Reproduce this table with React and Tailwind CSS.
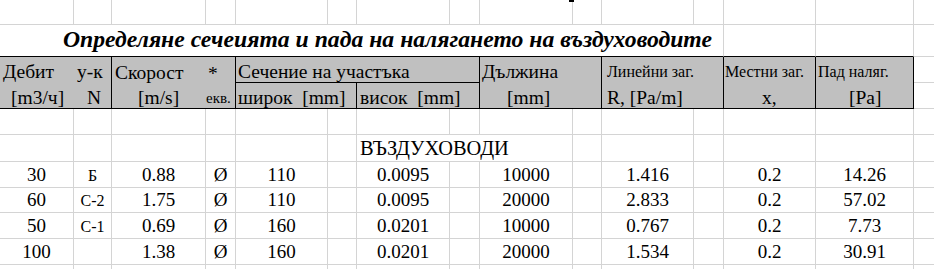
import React from "react";

// column widths incl. the 1px right grid line (Excel sheet columns)
const colW = [
  "w-[74px]", "w-[38px]", "w-[94px]", "w-[30px]", "w-[92px]", "w-[29px]", "w-[93px]",
  "w-[30px]", "w-[93px]", "w-[29px]", "w-[92px]", "w-[30px]", "w-[92px]", "w-[98px]", "w-[20px]",
];

const grid = "border-[#d4d4d4]";
const serif = "font-['Liberation_Serif','Times_New_Roman',serif]";

const rows = [
  ["30", "Б", "0.88", "Ø", "110", "", "0.0095", "", "10000", "", "1.416", "", "0.2", "14.26", ""],
  ["60", "С-2", "1.75", "Ø", "110", "", "0.0095", "", "20000", "", "2.833", "", "0.2", "57.02", ""],
  ["50", "С-1", "0.69", "Ø", "160", "", "0.0201", "", "10000", "", "0.767", "", "0.2", "7.73", ""],
  ["100", "", "1.38", "Ø", "160", "", "0.0201", "", "20000", "", "1.534", "", "0.2", "30.91", ""],
];
const rowH = ["h-[26px]", "h-[25px]", "h-[26px]", "h-[26px]"];

const EmptyRow = ({ h }) => (
  <div className={`flex ${h}`}>
    {colW.map((w, i) => (
      <div
        key={i}
        className={`${w} shrink-0 border-b ${grid} ${i < colW.length - 1 ? "border-r" : ""}`}
      />
    ))}
  </div>
);

const DataRow = ({ vals, h }) => (
  <div className={`flex ${h}`}>
    {vals.map((v, i) => (
      <div
        key={i}
        className={`${colW[i]} shrink-0 flex items-end justify-center whitespace-nowrap pb-[3px] leading-none border-b ${grid} ${
          i < colW.length - 1 ? "border-r" : ""
        } ${i === 1 ? "text-[16px]" : "text-[19px]"}`}
      >
        {v}
      </div>
    ))}
  </div>
);

const HBox = ({ w, children }) => (
  <div className={`${w} shrink-0 h-[52px] bg-[#c0c0c0] border-r border-b border-black flex flex-col`}>
    {children}
  </div>
);

const Line = ({ children, cls = "" }) => (
  <div className={`h-[26px] flex items-end whitespace-pre leading-none ${cls}`}>{children}</div>
);

export default function App() {
  return (
    <div className={`w-[934px] h-[269px] overflow-hidden bg-white text-black ${serif}`}>
      {/* top sheet row, cut off */}
      <div className="relative">
        <EmptyRow h="h-[25px]" />
        <span className="absolute left-[569px] top-0 w-[5px] h-[2px] bg-black" />
      </div>

      {/* title row */}
      <div className="flex h-[32px]">
        <div className={`w-[724px] shrink-0 border-r ${grid} border-b border-b-black flex items-end pl-[63px] pb-[4px]`}>
          <span className="text-[23.7px] font-bold italic leading-none whitespace-nowrap">
            Определяне сечеията и пада на налягането на въздуховодите
          </span>
        </div>
        <div className={`w-[92px] shrink-0 border-r ${grid} border-b border-b-black`} />
        <div className={`w-[98px] shrink-0 border-r ${grid} border-b border-b-black`} />
        <div className={`w-[20px] shrink-0 border-b ${grid}`} />
      </div>

      {/* table header */}
      <div className="flex text-[19.5px]">
        <HBox w="w-[112px]">
          <Line cls="pb-[1px]">
            <span className="w-[74px] pl-[3px]">Дебит</span>
            <span className="pl-[3px]">у-к</span>
          </Line>
          <Line cls="pb-[1px]">
            <span className="w-[74px] pl-[11px]">[m3/ч]</span>
            <span className="pl-[13px]">N</span>
          </Line>
        </HBox>
        <HBox w="w-[124px]">
          <Line cls="pb-[1px]">
            <span className="w-[94px] pl-[3px]">Скорост</span>
            <span className="pl-[2px] self-start pt-[7px]">*</span>
          </Line>
          <Line cls="pb-[1px]">
            <span className="w-[94px] pl-[26px]">[m/s]</span>
            <span className="text-[15px] pb-[1px]">екв.</span>
          </Line>
        </HBox>
        <div className="w-[244px] shrink-0 h-[52px] bg-[#c0c0c0] border-r border-black flex flex-col">
          <Line cls="pl-[2px] pb-[1px] border-b border-black">Сечение на участъка</Line>
          <div className="flex h-[26px] border-b border-black">
            <div className="w-[121px] shrink-0 border-r border-black flex items-end pl-[2px] pb-[1px] leading-none whitespace-pre">
              широк  [mm]
            </div>
            <div className="flex items-end pl-[3px] pb-[1px] leading-none whitespace-pre">висок  [mm]</div>
          </div>
        </div>
        <HBox w="w-[122px]">
          <Line cls="pl-[2px] pb-[1px]">Дължина</Line>
          <Line cls="pl-[27px] pb-[1px]">[mm]</Line>
        </HBox>
        <HBox w="w-[122px]">
          <Line cls="pl-[5px] pb-[3px] text-[16px]">Линейни заг.</Line>
          <Line cls="pl-[5px] pb-[1px]">R, [Pa/m]</Line>
        </HBox>
        <HBox w="w-[92px]">
          <Line cls="pl-[1px] pb-[3px] text-[16px]">Местни заг.</Line>
          <Line cls="pl-[38px] pb-[1px]">x,</Line>
        </HBox>
        <HBox w="w-[98px]">
          <Line cls="pl-[2px] pb-[3px] text-[16px]">Пад наляг.</Line>
          <Line cls="pl-[33px] pb-[1px]">[Pa]</Line>
        </HBox>
        <div className="w-[20px] shrink-0 flex flex-col">
          <div className={`h-[26px] border-b ${grid}`} />
          <div className={`h-[26px] border-b ${grid}`} />
        </div>
      </div>

      <EmptyRow h="h-[26px]" />

      {/* section caption row: text spills over two cells, hiding their grid lines */}
      <div className="flex h-[27px]">
        {colW.map((w, i) => (
          <div
            key={i}
            className={`${w} shrink-0 border-b ${grid} ${
              i < colW.length - 1 && i !== 6 && i !== 7 ? "border-r" : ""
            } ${i === 6 ? "flex items-end pl-[3px] pb-[3px] leading-none whitespace-nowrap text-[20.4px]" : ""}`}
          >
            {i === 6 ? "ВЪЗДУХОВОДИ" : null}
          </div>
        ))}
      </div>

      {rows.map((r, i) => (
        <DataRow key={i} vals={r} h={rowH[i]} />
      ))}
      <EmptyRow h="h-[10px]" />
    </div>
  );
}
